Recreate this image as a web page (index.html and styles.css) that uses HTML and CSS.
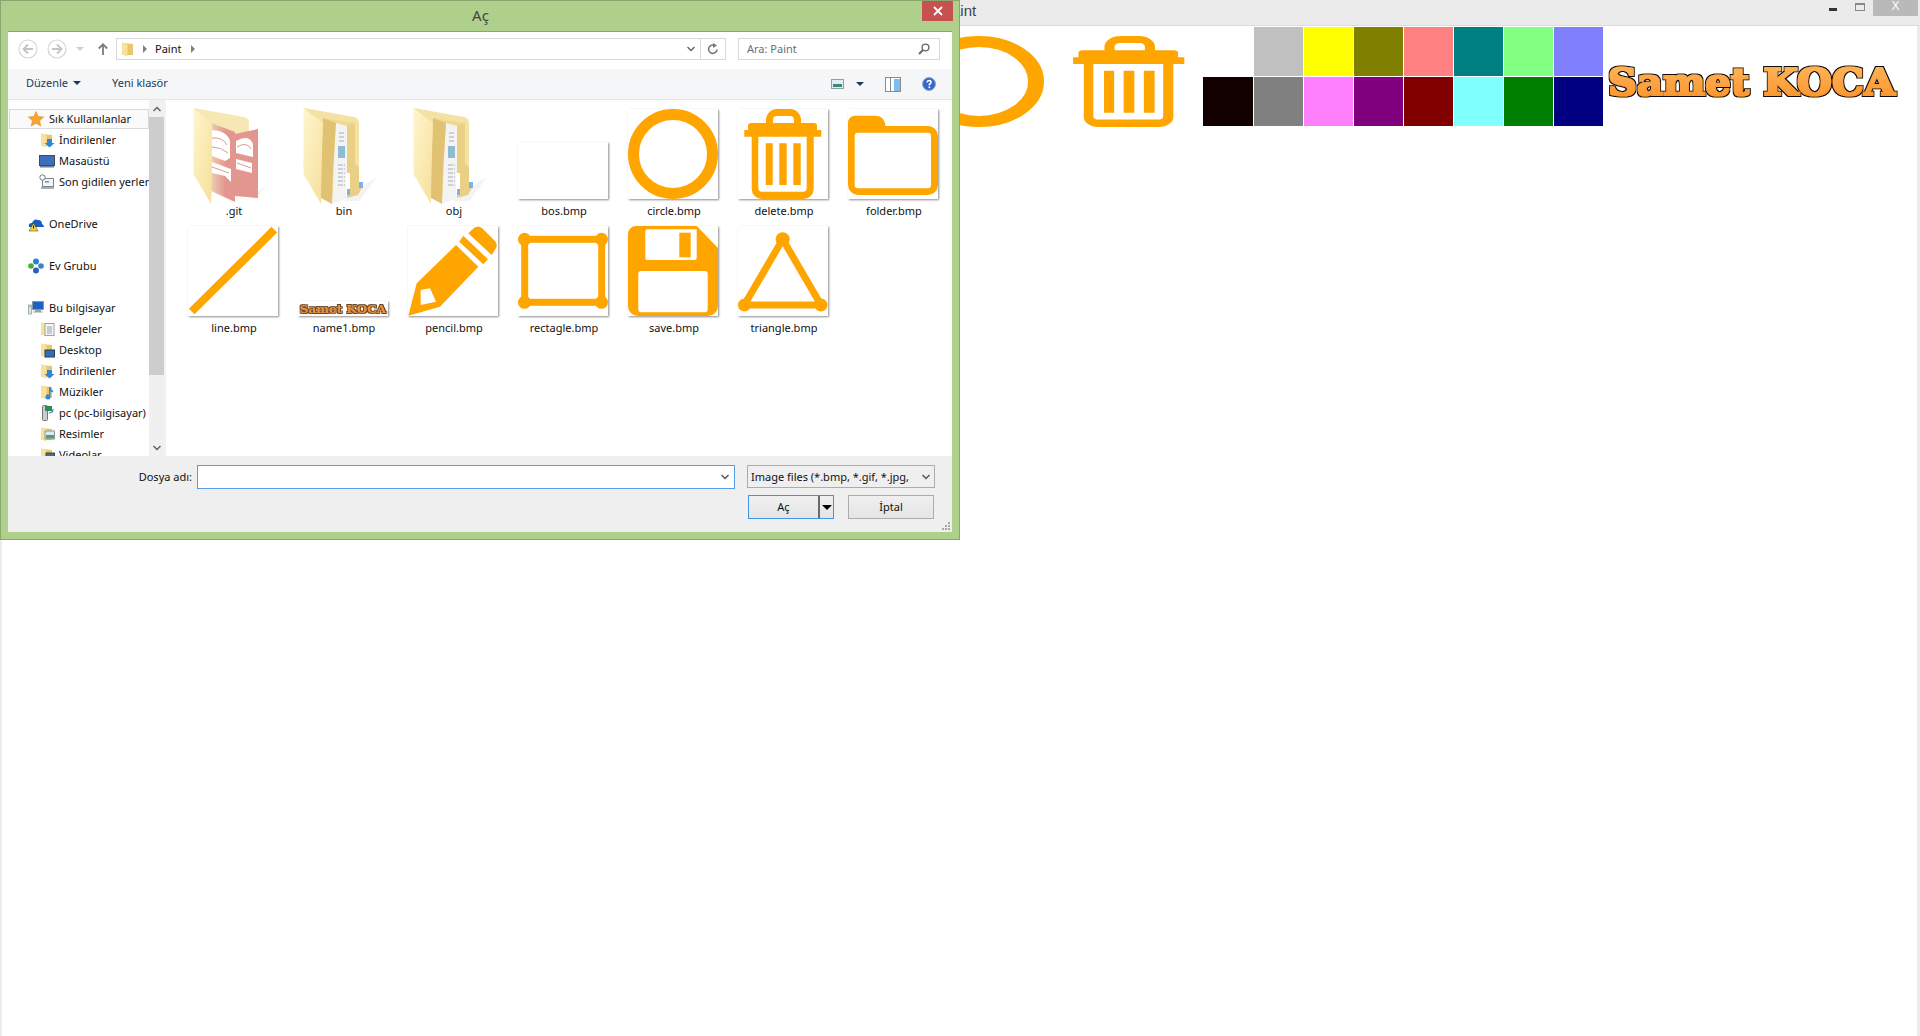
FILE: index.html
```html
<!DOCTYPE html>
<html lang="tr">
<head>
<meta charset="utf-8">
<title>Paint</title>
<link rel="stylesheet" href="styles.css">
</head>
<body>
<svg class="defs" width="0" height="0" aria-hidden="true">
  <defs>
    <linearGradient id="logoFill" x1="0" y1="0" x2="0" y2="1"><stop offset="0" stop-color="#ffb860"/><stop offset="1" stop-color="#fb8f24"/></linearGradient>
    <linearGradient id="flapFill" x1="0" y1="0" x2="1" y2="1"><stop offset="0" stop-color="#fff6cf"/><stop offset="1" stop-color="#f6df98"/></linearGradient>
    <linearGradient id="pageFade" x1="0" y1="0" x2="1" y2="0"><stop offset="0" stop-color="#ecd0b0"/><stop offset=".6" stop-color="#e3968f"/></linearGradient>
    <filter id="chunky" x="-3%" y="-15%" width="106%" height="130%">
      <feMorphology in="SourceAlpha" operator="dilate" radius="1.900" result="o"/>
      <feFlood flood-color="#111"/>
      <feComposite in2="o" operator="in" result="outline"/>
      <feMorphology in="SourceGraphic" operator="dilate" radius=".8" result="fat"/>
      <feMerge><feMergeNode in="outline"/><feMergeNode in="fat"/></feMerge>
    </filter>
    <filter id="chunkySmall" x="-3%" y="-15%" width="106%" height="130%">
      <feMorphology in="SourceAlpha" operator="dilate" radius="2" result="o"/>
      <feFlood flood-color="#6b4526"/>
      <feComposite in2="o" operator="in" result="outline"/>
      <feMorphology in="SourceGraphic" operator="dilate" radius=".8" result="fat"/>
      <feMerge><feMergeNode in="outline"/><feMergeNode in="fat"/></feMerge>
    </filter>

    <symbol id="i-circle" viewBox="0 0 90 90" preserveAspectRatio="none"><circle cx="45" cy="45" r="39.500" fill="none" stroke="#ffa500" stroke-width="11"/></symbol>
    <symbol id="i-delete" viewBox="0 0 90 90" preserveAspectRatio="none"><path fill="#ffa500" fill-rule="evenodd" d="M28 14V11A11 11 0 0 1 39 0H52A11 11 0 0 1 63 11V14H76Q79 14 79 17V21H83.300V27.700H75.700V80A10 10 0 0 1 65.700 90H23.700A10 10 0 0 1 13.700 80V27.700H6.300V21H10V17Q10 14 13 14ZM35 14H56V11Q56 7 52 7H39Q35 7 35 11ZM20.300 27.700V79Q20.300 82.700 24 82.700H65Q68.700 82.700 68.700 79V27.700ZM27.700 34.300H34.700V76H27.700ZM41.300 34.300H48.700V76H41.300ZM55.300 34.300H62.700V76H55.300Z"/></symbol>
    <symbol id="i-folder" viewBox="0 0 90 90" preserveAspectRatio="none"><path fill="#ffa500" fill-rule="evenodd" d="M0 14A7 7 0 0 1 7 6.700H28Q36 6.700 37.500 17H80A10 10 0 0 1 90 27V76A10 10 0 0 1 80 86H10A10 10 0 0 1 0 76ZM10 23.700Q6.700 23.700 6.700 27V76Q6.700 79.300 10 79.300H80Q83 79.300 83 76V27Q83 23.700 80 23.700Z"/></symbol>
    <symbol id="i-line" viewBox="0 0 90 90" preserveAspectRatio="none"><path stroke="#ffa500" stroke-width="8" d="M3.700 85.500L86.300 3.700"/></symbol>
    <symbol id="i-pencil" viewBox="0 0 90 90" preserveAspectRatio="none"><path fill="#ffa500" fill-rule="evenodd" d="M60.300 7.300L66 2Q70 -1 74 2L87 15Q90 19 88 22L83.700 29ZM51.300 15.700L55.300 9.700L80 33.300L75.300 38.300ZM48 19L70.300 40.700L32 80.700L.3 89.700L8.700 57.300ZM12.700 64L22 62.300L28 75.700L12.700 79Z"/></symbol>
    <symbol id="i-rect" viewBox="0 0 90 90" preserveAspectRatio="none"><rect x="6.700" y="13.300" width="77" height="63" fill="none" stroke="#ffa500" stroke-width="7"/><circle cx="6.500" cy="13.300" r="6.500" fill="#ffa500"/><circle cx="83.500" cy="13.300" r="6.500" fill="#ffa500"/><circle cx="6.500" cy="76.300" r="6.500" fill="#ffa500"/><circle cx="83.500" cy="76.300" r="6.500" fill="#ffa500"/></symbol>
    <symbol id="i-save" viewBox="0 0 90 90" preserveAspectRatio="none"><path fill="#ffa500" fill-rule="evenodd" d="M8 0H68.700L90 22V80A10 10 0 0 1 80 90H10A10 10 0 0 1 0 80V8A8 8 0 0 1 8 0ZM19 3.300Q17.300 3.300 17.300 5V32Q17.300 34 19 34H67Q68.700 34 68.700 32V3.300ZM13 45Q10.300 45 10.300 48V83Q10.300 86.300 13 86.300H77Q79.700 86.300 79.700 83V48Q79.700 45 77 45Z"/><rect x="51.300" y="6.700" width="11.400" height="24.600" fill="#ffa500"/></symbol>
    <symbol id="i-tri" viewBox="0 0 90 90" preserveAspectRatio="none"><path fill="none" stroke="#ffa500" stroke-width="7" d="M44.700 13.300L83 79H6.300Z"/><circle cx="44.700" cy="13.300" r="7" fill="#ffa500"/><circle cx="6.500" cy="79" r="6.500" fill="#ffa500"/><circle cx="83" cy="79" r="6.500" fill="#ffa500"/></symbol>

    <symbol id="bigfolder" viewBox="190 105 80 100">
      <path fill="#f3f3f3" d="M235 200L258 182L268 176L250 200Z"/>
      <path fill="#f4e2a5" d="M195 107L245 116Q250 117 250 122V188L225 195L195 175Z"/>
      <path fill="#f0d98f" d="M214 117L246 122V185L230 200L212 195Z"/>
      <path fill="#d9bc6c" d="M232 126H238V197L232 199Z"/>
      <path fill="#f3f3f3" d="M226.700 122L238 125V197L223 203Z"/>
      <path stroke="#a8aeb6" stroke-width="1" stroke-dasharray="5 1" d="M230 132H236M230 136H236M230 140H236M229 164H236M229 168H236M229 172H236M229 176H236M229 180H236M229 184H236"/>
      <path fill="#8fbcd2" d="M229 145h7v12h-7z"/>
      <path fill="#e0c272" d="M214 117L227 122L224 167L223 203L212 197Z"/>
      <path fill="#e9d084" d="M246 122V163L250 166H254V185L249 194L238 197V125Z"/>
      <path fill="#fff" d="M250 166h4v20h-4z"/>
      <path fill="#7ab3ea" d="M250 181h4v6h-4z"/>
      <path fill="#fff" d="M237 172h4v22h-4z"/>
      <path fill="#7ab3ea" d="M238 188h3v6h-3z"/>
      <path fill="url(#flapFill)" d="M194.500 107L214 122L212 168L212 203L194.500 173Z"/>
    </symbol>

    <symbol id="gitfolder" viewBox="190 105 80 100">
      <path fill="#f3f3f3" d="M250 197L262 188L268 184L256 198Z"/>
      <path fill="#f6e7b4" d="M195 107L245 116Q250 117 250 122V135H225V190L195 175Z"/>
      <path fill="#e3968f" d="M236 133L259 128V197L236 195Z"/>
      <path fill="url(#pageFade)" d="M212 122L236 131V201L212 190Z"/>
      <path fill="#fff" d="M213 129Q228 130 231 140V157L226 160L213 155Z"/>
      <path fill="#fff" d="M213 161L232 168V181L226 175L213 172ZM237 140Q250 133 254 143V156L237 152Z"/>
      <path fill="#fff" d="M237 158L253 162V172L237 168Z"/>
      <path stroke="#e3968f" stroke-width="1" fill="none" d="M213 137Q224 136 228 144M213 146Q222 146 229 152M213 166L230 172M238 146Q248 140 252 148M238 162L252 167"/>
      <path fill="url(#flapFill)" d="M194.500 107L213 122L213 170L212 203L194.500 173Z"/>
    </symbol>

    <symbol id="s-folder" viewBox="0 0 16 16"><path fill="#e8c66c" d="M2 2L13 3V14H2Z"/><path fill="#f8e29a" d="M2 1L7.500 3.500V15.500L2 13.500Z"/></symbol>
    <symbol id="s-arrow" viewBox="0 0 16 16"><path fill="#2f86d8" d="M8 7h5v4h2.500L10.500 15.500L5.500 11H8Z"/></symbol>
    <symbol id="s-star" viewBox="0 0 16 16"><path fill="#f6a630" stroke="#e08a1c" stroke-width=".6" d="M8 .5L10.200 5.600L15.600 6.100L11.500 9.700L12.800 15L8 12.200L3.200 15L4.500 9.700L.4 6.100L5.800 5.600Z"/></symbol>
    <symbol id="s-desk" viewBox="0 0 16 16"><rect x=".5" y="2.500" width="15" height="10" fill="#3d6fb8" stroke="#3a4c66"/><rect x="1" y="13" width="14" height="1.500" fill="#6a7f99"/></symbol>
    <symbol id="s-recent" viewBox="0 0 16 16"><rect x="3.500" y="4.500" width="11" height="8" fill="#f2f5f8" stroke="#80868c"/><rect x="6" y="7" width="4" height="1.500" fill="#49a0d8"/><rect x="2" y="13" width="13" height="2" fill="#a9aeb3"/><circle cx="3.500" cy="3.500" r="2.700" fill="#fff" stroke="#777"/></symbol>
    <symbol id="s-cloud" viewBox="0 0 16 16"><path fill="#1760b8" d="M1 11Q0 7 4 7Q6 2 10 4Q14 4 14 8Q16 9 16 11Z"/><path fill="#fbd23c" stroke="#333" stroke-width=".5" d="M5.500 7L10 15H1Z"/><path stroke="#222" d="M5.500 9.500V12.500"/></symbol>
    <symbol id="s-group" viewBox="0 0 16 16"><circle cx="8" cy="3.500" r="3" fill="#2b7fd0"/><circle cx="3" cy="8" r="2.800" fill="#4caa3f"/><circle cx="13" cy="8" r="2.800" fill="#3f7fd0"/><circle cx="8" cy="12.500" r="3" fill="#2f5fb8"/></symbol>
    <symbol id="s-pc" viewBox="0 0 16 16"><rect x="4.500" y="1.500" width="11" height="8" fill="#1f5fc8" stroke="#8c96a0"/><path fill="#9aa2aa" d="M7 10h6v1.500h2v1H5v-1h2Z"/><rect x=".5" y="5" width="3" height="9" fill="#dfe3e6" stroke="#8c96a0" stroke-width=".7"/><rect x="1.200" y="6" width="1.500" height="1" fill="#6ac04a"/></symbol>
    <symbol id="s-doc" viewBox="0 0 16 16"><rect x="6" y="2.500" width="9" height="12" fill="#f6f6f6" stroke="#9aa2aa"/><path stroke="#9aa2aa" d="M8 6h5M8 8h5M8 10h5M8 12h5"/></symbol>
    <symbol id="s-desk2" viewBox="0 0 16 16"><rect x="6" y="8" width="9.500" height="7" fill="#2f6fb8" stroke="#2d3c50"/></symbol>
    <symbol id="s-note" viewBox="0 0 16 16"><path fill="#2f86d8" d="M10 3h1.500q.5 3 3 4l-1 1.500l-2-1.500V13a2.500 2.500 0 1 1-1.500-2.300Z"/></symbol>
    <symbol id="s-net" viewBox="0 0 16 16"><rect x="3.500" y=".5" width="5" height="15" rx="1" fill="#c9ccd0" stroke="#777"/><rect x="6" y="1" width="7" height="5" fill="#2d8f4a"/><path fill="none" stroke="#2f86d8" stroke-width="1.200" d="M10 8Q14 8 14 4"/></symbol>
    <symbol id="s-pic" viewBox="0 0 16 16"><rect x="6" y="5" width="9.500" height="8" fill="#d8eaf6" stroke="#8c96a0"/><rect x="7" y="9" width="8" height="3.500" fill="#5b9a6a"/></symbol>
    <symbol id="s-vid" viewBox="0 0 16 16"><rect x="7" y="6" width="8.500" height="7" fill="#566878" stroke="#3c4650"/></symbol>
  </defs>
</svg>

<div class="app">
  <header class="app-title">
    <span class="app-name">Paint</span>
    <div class="app-controls">
      <span class="app-min"></span>
      <span class="app-max"></span>
      <span class="app-close">X</span>
    </div>
  </header>
  <main class="app-body">
    <div class="tools">
      <svg class="tool"><use href="#i-line"/></svg>
      <svg class="tool"><use href="#i-rect"/></svg>
      <svg class="tool"><use href="#i-tri"/></svg>
      <svg class="tool"><use href="#i-pencil"/></svg>
      <svg class="tool"><use href="#i-folder"/></svg>
      <svg class="tool"><use href="#i-save"/></svg>
      <svg class="tool"><use href="#i-circle"/></svg>
      <svg class="tool"><use href="#i-delete"/></svg>
    </div>
    <div class="palette">
      <span class="swatch c-white"></span><span class="swatch c-silver"></span><span class="swatch c-yellow"></span><span class="swatch c-olive"></span><span class="swatch c-salmon"></span><span class="swatch c-teal"></span><span class="swatch c-mint"></span><span class="swatch c-peri"></span>
      <span class="swatch c-black"></span><span class="swatch c-gray"></span><span class="swatch c-pink"></span><span class="swatch c-purple"></span><span class="swatch c-maroon"></span><span class="swatch c-cyan"></span><span class="swatch c-green"></span><span class="swatch c-navy"></span>
    </div>
    <svg class="logo" viewBox="0 0 291 33"><text class="logo-text" x="1" y="30" textLength="287" lengthAdjust="spacingAndGlyphs" fill="url(#logoFill)" filter="url(#chunky)">Samet KOCA</text></svg>
  </main>
</div>

<section class="dialog">
  <div class="dlg-title">
    <span class="dlg-name">Aç</span>
    <span class="dlg-close"><svg width="10" height="10" viewBox="0 0 10 10"><path stroke="#fff" stroke-width="1.800" d="M1 1L9 9M9 1L1 9"/></svg></span>
  </div>
  <div class="dlg-inner">
    <div class="navbar">
      <div class="nav-btns">
        <svg class="nav-round" viewBox="0 0 20 20"><circle cx="10" cy="10" r="9" fill="#fff" stroke="#d4d4d4" stroke-width="1.200"/><path fill="none" stroke="#c4c4c4" stroke-width="1.800" d="M15 10H6M10 5.500L5.500 10L10 14.500"/></svg>
        <svg class="nav-round" viewBox="0 0 20 20"><circle cx="10" cy="10" r="9" fill="#fff" stroke="#d4d4d4" stroke-width="1.200"/><path fill="none" stroke="#c4c4c4" stroke-width="1.800" d="M5 10H14M10 5.500L14.500 10L10 14.500"/></svg>
        <svg class="nav-drop" viewBox="0 0 8 4"><path fill="#d0d0d0" d="M0 0H8L4 4Z"/></svg>
        <svg class="nav-up" viewBox="0 0 10 12"><path fill="none" stroke="#7c7c7c" stroke-width="1.800" d="M5 12V1.500M.8 5.500L5 1.300L9.200 5.500"/></svg>
      </div>
      <div class="addr">
        <div class="addr-path">
          <svg class="addr-folder"><use href="#s-folder"/></svg>
          <span class="crumb-tri"></span>
          <span class="crumb">Paint</span>
          <span class="crumb-tri"></span>
        </div>
        <svg class="chev addr-chev" viewBox="0 0 8 6"><path fill="none" stroke="#666" stroke-width="1.500" d="M.5 1L4 4.500L7.500 1"/></svg>
        <span class="addr-refresh"><svg width="12" height="12" viewBox="0 0 12 12"><path fill="none" stroke="#777" stroke-width="1.600" d="M10 6.500A4.200 4.200 0 1 1 7 2.200"/><path fill="#777" d="M6 0L10 2.500L6 5Z"/></svg></span>
      </div>
      <div class="search">
        <span class="search-text">Ara: Paint</span>
        <svg class="search-icon" viewBox="0 0 12 12"><circle cx="7.500" cy="4.500" r="3.400" fill="none" stroke="#6a6a6a" stroke-width="1.400"/><path stroke="#6a6a6a" stroke-width="2" d="M5 7L1 11"/></svg>
      </div>
    </div>

    <div class="cmdbar">
      <span class="cmd">Düzenle<span class="cmd-tri"></span></span>
      <span class="cmd cmd-new">Yeni klasör</span>
      <div class="cmd-right">
        <svg class="cmd-view" viewBox="0 0 13 12"><rect x=".5" y="1.500" width="12" height="9" fill="#dfeefa" stroke="#8ba0b5"/><rect x="2" y="6" width="9" height="3" fill="#3f8a6a"/></svg>
        <span class="cmd-tri cmd-tri-right"></span>
        <svg class="cmd-pane" viewBox="0 0 16 15"><rect x=".5" y=".5" width="15" height="14" fill="#fff" stroke="#8a8a8a"/><path stroke="#8a8a8a" d="M5.500 1V14"/><rect x="9" y="2" width="6" height="12" fill="#7fbcf0"/></svg>
        <svg class="cmd-help" viewBox="0 0 14 14"><circle cx="7" cy="7" r="6.500" fill="#3566c8" stroke="#9aa7bd"/><path fill="none" stroke="#fff" stroke-width="1.600" d="M5 5.300Q5.200 3.500 7.200 3.500Q9.200 3.700 9 5.400Q8.700 6.400 7.400 7.200V8.500"/><rect x="6.500" y="9.500" width="1.700" height="1.700" fill="#fff"/></svg>
      </div>
    </div>

    <div class="browser">
      <nav class="tree">
        <div class="tree-list">
          <div class="t-row t-top t-sel"><svg class="t-ic"><use href="#s-star"/></svg>Sık Kullanılanlar</div>
          <div class="t-row t-sub"><svg class="t-ic"><use href="#s-folder"/><use href="#s-arrow"/></svg>İndirilenler</div>
          <div class="t-row t-sub"><svg class="t-ic"><use href="#s-desk"/></svg>Masaüstü</div>
          <div class="t-row t-sub"><svg class="t-ic"><use href="#s-recent"/></svg>Son gidilen yerler</div>
          <div class="t-row t-gap"></div>
          <div class="t-row t-top"><svg class="t-ic"><use href="#s-cloud"/></svg>OneDrive</div>
          <div class="t-row t-gap"></div>
          <div class="t-row t-top"><svg class="t-ic"><use href="#s-group"/></svg>Ev Grubu</div>
          <div class="t-row t-gap"></div>
          <div class="t-row t-top"><svg class="t-ic"><use href="#s-pc"/></svg>Bu bilgisayar</div>
          <div class="t-row t-sub"><svg class="t-ic"><use href="#s-folder"/><use href="#s-doc"/></svg>Belgeler</div>
          <div class="t-row t-sub"><svg class="t-ic"><use href="#s-folder"/><use href="#s-desk2"/></svg>Desktop</div>
          <div class="t-row t-sub"><svg class="t-ic"><use href="#s-folder"/><use href="#s-arrow"/></svg>İndirilenler</div>
          <div class="t-row t-sub"><svg class="t-ic"><use href="#s-folder"/><use href="#s-note"/></svg>Müzikler</div>
          <div class="t-row t-sub"><svg class="t-ic"><use href="#s-net"/></svg>pc (pc-bilgisayar)</div>
          <div class="t-row t-sub"><svg class="t-ic"><use href="#s-folder"/><use href="#s-pic"/></svg>Resimler</div>
          <div class="t-row t-sub"><svg class="t-ic"><use href="#s-folder"/><use href="#s-vid"/></svg>Videolar</div>
        </div>
        <div class="vscroll">
          <span class="v-arrow"><svg class="chev" viewBox="0 0 8 6"><path fill="none" stroke="#606060" stroke-width="1.500" d="M.5 5L4 1.500L7.500 5"/></svg></span>
          <div class="v-track"><div class="v-thumb"></div></div>
          <span class="v-arrow"><svg class="chev" viewBox="0 0 8 6"><path fill="none" stroke="#606060" stroke-width="1.500" d="M.5 1L4 4.500L7.500 1"/></svg></span>
        </div>
      </nav>
      <div class="files">
        <figure class="file"><div class="thumb-box"><svg class="bigfolder"><use href="#gitfolder"/></svg></div><figcaption>.git</figcaption></figure>
        <figure class="file"><div class="thumb-box"><svg class="bigfolder"><use href="#bigfolder"/></svg></div><figcaption>bin</figcaption></figure>
        <figure class="file"><div class="thumb-box"><svg class="bigfolder"><use href="#bigfolder"/></svg></div><figcaption>obj</figcaption></figure>
        <figure class="file"><div class="thumb-box"><div class="thumb thumb-bos"></div></div><figcaption>bos.bmp</figcaption></figure>
        <figure class="file"><div class="thumb-box"><svg class="thumb"><use href="#i-circle"/></svg></div><figcaption>circle.bmp</figcaption></figure>
        <figure class="file"><div class="thumb-box"><svg class="thumb"><use href="#i-delete"/></svg></div><figcaption>delete.bmp</figcaption></figure>
        <figure class="file"><div class="thumb-box"><svg class="thumb"><use href="#i-folder"/></svg></div><figcaption>folder.bmp</figcaption></figure>
        <figure class="file"><div class="thumb-box"><svg class="thumb"><use href="#i-line"/></svg></div><figcaption>line.bmp</figcaption></figure>
        <figure class="file"><div class="thumb-box"><svg class="thumb thumb-name" viewBox="0 0 291 48" preserveAspectRatio="none"><text class="logo-small" x="6" y="38" textLength="279" lengthAdjust="spacingAndGlyphs" fill="#ec8f38" filter="url(#chunkySmall)">Samet KOCA</text></svg></div><figcaption>name1.bmp</figcaption></figure>
        <figure class="file"><div class="thumb-box"><svg class="thumb"><use href="#i-pencil"/></svg></div><figcaption>pencil.bmp</figcaption></figure>
        <figure class="file"><div class="thumb-box"><svg class="thumb"><use href="#i-rect"/></svg></div><figcaption>rectagle.bmp</figcaption></figure>
        <figure class="file"><div class="thumb-box"><svg class="thumb"><use href="#i-save"/></svg></div><figcaption>save.bmp</figcaption></figure>
        <figure class="file"><div class="thumb-box"><svg class="thumb"><use href="#i-tri"/></svg></div><figcaption>triangle.bmp</figcaption></figure>
      </div>
    </div>

    <div class="footer">
      <div class="f-row">
        <span class="f-label">Dosya adı:</span>
        <div class="f-input"><svg class="chev" viewBox="0 0 8 6"><path fill="none" stroke="#555" stroke-width="1.500" d="M.5 1L4 4.500L7.500 1"/></svg></div>
        <div class="f-select"><span class="f-select-text">Image files (*.bmp, *.gif, *.jpg, *</span><svg class="chev" viewBox="0 0 8 6"><path fill="none" stroke="#555" stroke-width="1.500" d="M.5 1L4 4.500L7.500 1"/></svg></div>
      </div>
      <div class="f-row f-btns">
        <button class="btn btn-open"><span class="btn-main">Aç</span><span class="btn-split"></span><span class="btn-tri"></span></button>
        <button class="btn btn-cancel">İptal</button>
      </div>
      <svg class="grip" viewBox="0 0 8 8"><path fill="#a8a8a8" d="M6 0h2v2H6zM3 3h2v2H3zM6 3h2v2H6zM0 6h2v2H0zM3 6h2v2H3zM6 6h2v2H6z"/></svg>
    </div>
  </div>
</section>
</body>
</html>
```
FILE: styles.css
```css
* { box-sizing: border-box; }
html, body { margin: 0; height: 100%; overflow: hidden; }
body { font-family: "Noto Sans", "Open Sans", sans-serif; font-size: 11px; color: #111; background: #fff; position: relative; }
.defs { position: absolute; }

/* background application window */
.app { height: 1036px; display: flex; flex-direction: column; background: #ebebeb; padding: 0 3px 0 2px; }
.app-title { height: 26px; flex: none; display: flex; justify-content: flex-end; border-bottom: 1px solid #dcdcdc; position: relative; margin: 0 -3px 0 -2px; }
.app-name { position: absolute; left: 942px; top: 1px; font-size: 15px; line-height: 20px; color: #3a4450; font-family: "Liberation Sans", sans-serif; }
.app-controls { display: flex; align-items: flex-start; }
.app-min { width: 8px; height: 3px; background: #333; margin: 8px 18px 0 0; }
.app-max { width: 10px; height: 8px; border: 1px solid #888; border-top-width: 2px; margin: 3px 8px 0 0; }
.app-close { width: 45px; height: 16px; margin-right: 2px; background: #b9b9b9; color: #fff; text-align: center; font: 12px/13px "Liberation Sans", sans-serif; }
.app-body { flex: 1; background: #fff; display: flex; align-items: flex-start; padding-left: 12px; }
.tools { display: flex; gap: 20px; margin-top: 10px; }
.tool { width: 130px; height: 91px; display: block; }
.palette { display: grid; grid-template-columns: 50px repeat(7, 49px); grid-auto-rows: 49px; gap: 1px; margin: 1px 0 0 9px; }
.swatch { display: block; }
.c-white { background: #fff; } .c-silver { background: #c0c0c0; } .c-yellow { background: #ff0; } .c-olive { background: #808000; }
.c-salmon { background: #ff8080; } .c-teal { background: #008080; } .c-mint { background: #80ff80; } .c-peri { background: #8080ff; }
.c-black { background: #120000; } .c-gray { background: #808080; } .c-pink { background: #ff80ff; } .c-purple { background: #800080; }
.c-maroon { background: #800000; } .c-cyan { background: #80ffff; } .c-green { background: #008000; } .c-navy { background: #000080; }
.logo { width: 291px; height: 33px; margin: 39px 0 0 4px; overflow: visible; flex: none; }
.logo-text { font: bold 37px "DejaVu Serif", serif; }

/* dialog window */
.dialog { position: absolute; left: 0; top: 0; width: 960px; height: 540px; background: #aed08a; border: 1px solid #8aa66e; padding: 0 7px 7px; display: flex; flex-direction: column; }
.dlg-title { height: 30px; flex: none; display: flex; justify-content: center; position: relative; }
.dlg-name { font-size: 15px; line-height: 29px; color: #444; margin-left: 1px; }
.dlg-close { position: absolute; right: -1px; top: 0; width: 31px; height: 20px; background: #c75050; display: flex; align-items: center; justify-content: center; }
.dlg-inner { flex: 1; display: flex; flex-direction: column; background: #fff; border: 1px solid #8aa66e; border-width: 1px 0 0 0; min-height: 0; }

.navbar { height: 37px; flex: none; display: flex; padding: 6px 11px 0 10px; }
.nav-btns { width: 98px; display: flex; align-items: center; height: 22px; }
.nav-round { width: 20px; height: 20px; display: block; margin-right: 9px; }
.nav-drop { width: 8px; height: 4px; margin: 0 14px 0 0; }
.nav-up { width: 10px; height: 12px; }
.addr { width: 610px; height: 22px; border: 1px solid #d9d9d9; display: flex; align-items: center; }
.addr-path { flex: 1; display: flex; align-items: center; height: 100%; padding-left: 3px; }
.addr-folder { width: 16px; height: 16px; }
.crumb { margin: 0 10px 1px 8px; color: #111; }
.crumb-tri { width: 0; height: 0; border-left: 4px solid #808080; border-top: 4px solid transparent; border-bottom: 4px solid transparent; }
.addr-folder + .crumb-tri { margin-left: 7px; }
.addr-chev { margin-right: 5px; }
.addr-refresh { width: 25px; height: 100%; border-left: 1px solid #d9d9d9; display: flex; align-items: center; justify-content: center; }
.chev { width: 8px; height: 6px; display: block; }
.search { width: 202px; height: 22px; margin-left: 12px; border: 1px solid #d9d9d9; display: flex; align-items: center; justify-content: space-between; padding: 0 9px 0 8px; color: #6d6d6d; }
.search-text { margin-bottom: 1px; }
.search-icon { width: 12px; height: 12px; }

.cmdbar { height: 31px; flex: none; background: #f5f6f7; border-bottom: 1px solid #e5e5e5; display: flex; align-items: center; padding: 0 16px 0 18px; color: #1e395b; }
.cmd { display: flex; align-items: center; padding-bottom: 3px; }
.cmd-new { margin-left: 31px; }
.cmd-tri { width: 0; height: 0; border-top: 4px solid #1e395b; border-left: 4px solid transparent; border-right: 4px solid transparent; margin-left: 5px; }
.cmd-right { margin-left: auto; display: flex; align-items: center; }
.cmd-view { width: 13px; height: 12px; }
.cmd-tri-right { margin-left: 12px; }
.cmd-pane { width: 16px; height: 15px; margin-left: 21px; }
.cmd-help { width: 14px; height: 14px; margin-left: 21px; }

.browser { flex: 1; min-height: 0; display: flex; overflow: hidden; }
.tree { width: 158px; flex: none; display: flex; border-right: 2px solid #f2f2f2; }
.tree-list { width: 141px; overflow: hidden; padding-top: 8px; white-space: nowrap; }
.t-row { height: 21px; display: flex; align-items: center; line-height: 21px; color: #111; overflow: hidden; }
.t-ic { width: 16px; height: 16px; flex: none; overflow: visible; }
.t-top { padding-left: 20px; }
.t-top .t-ic { margin-right: 5px; }
.t-sub { padding-left: 31px; }
.t-sub .t-ic { margin-right: 4px; }
.t-sel { border: 1px solid #d9d9d9; background: #fafafa; margin: 1px 0 0 1px; width: 140px; height: 20px; padding: 0 0 1px 18px; }
.vscroll { width: 15px; background: #f0f0f0; display: flex; flex-direction: column; }
.v-arrow { height: 17px; flex: none; display: flex; align-items: center; justify-content: center; }
.v-track { flex: 1; min-height: 0; }
.v-thumb { height: 258px; background: #cdcdcd; }
.files { flex: 1; display: grid; grid-template-columns: repeat(7, 110px); grid-auto-rows: 117px; align-content: start; padding: 9px 0 0 13px; }
.file { margin: 0; display: flex; flex-direction: column; align-items: center; width: 110px; }
.thumb-box { width: 90px; height: 90px; display: flex; align-items: flex-end; margin-right: 2px; position: relative; }
.thumb { width: 90px; height: 90px; display: block; background: #fff; box-shadow: 1px 1px 2px rgba(0,0,0,.45); overflow: hidden; }
.thumb-bos { height: 57px; }
.thumb-name { height: 15px; }
.bigfolder { position: absolute; left: 1px; top: -3px; width: 80px; height: 100px; overflow: visible; }
.logo-small { font: bold 37px "DejaVu Serif", serif; }
.file figcaption { margin-top: 4px; line-height: 16px; color: #111; text-align: center; }

.footer { height: 76px; flex: none; background: #efefef; position: relative; padding: 9px 17px 0 0; }
.f-row { display: flex; align-items: flex-start; justify-content: flex-end; }
.f-label { line-height: 24px; margin-right: 5px; }
.f-input { width: 538px; height: 24px; background: #fff; border: 1px solid #569de5; display: flex; align-items: center; justify-content: flex-end; padding-right: 5px; }
.f-select { width: 188px; height: 23px; margin-left: 12px; border: 1px solid #acacac; background: #efefef; display: flex; align-items: center; padding: 0 4px 0 3px; }
.f-select-text { width: 160px; overflow: hidden; white-space: nowrap; margin-right: 11px; color: #111; }
.f-btns { margin-top: 6px; padding-right: 1px; }
.btn { font: inherit; color: #111; height: 24px; width: 86px; padding: 0 0 2px; border: 1px solid #acacac; background: linear-gradient(#f0f0f0, #e5e5e5); display: block; text-align: center; }
.btn-open { border-color: #3f93e8; display: flex; align-items: center; margin-right: 14px; padding: 0; }
.btn-main { flex: 1; margin: 0 0 2px 0; }
.btn-split { width: 2px; height: 22px; background: #6a6a6a; margin-right: 2px; }
.btn-tri { width: 0; height: 0; border-top: 5px solid #000; border-left: 5px solid transparent; border-right: 5px solid transparent; margin-right: 1px; }
.grip { position: absolute; right: 2px; bottom: 2px; width: 8px; height: 8px; }
```
